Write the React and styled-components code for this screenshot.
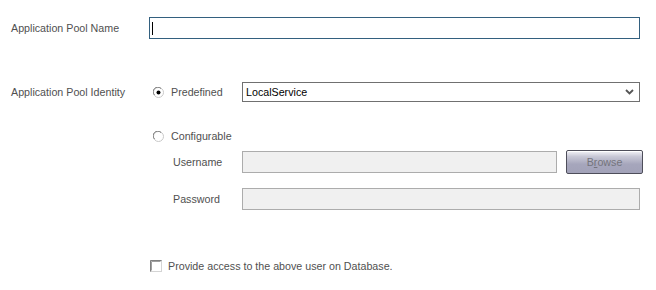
import React from 'react';
import styled, { createGlobalStyle } from 'styled-components';

const GlobalStyle = createGlobalStyle`
    html, body {
        margin: 0;
        padding: 0;
        background: #ffffff;
    }
    body {
        font-family: "Liberation Sans", Arial, sans-serif;
        font-size: 10.7px;
        color: #505050;
    }
`;

const Form = styled.div`
    width: 656px;
    height: 290px;
    box-sizing: border-box;
    padding: 17px 0 0 11px;
    display: flex;
    flex-direction: column;
`;

const Row = styled.div`
    display: flex;
    align-items: center;
    margin-top: ${({top}) => top || 0}px;
    padding-left: ${({indent}) => indent || 0}px;
`;

const Label = styled.span`
    width: ${({width}) => width}px;
    flex-shrink: 0;
    font-size: 10.7px;
    color: #505050;
    white-space: nowrap;
`;

const TextBox = styled.div`
    box-sizing: border-box;
    width: ${({width}) => width}px;
    height: 22px;
    border: 1px solid ${({disabled}) => disabled ? '#acacac' : '#33607f'};
    background: ${({disabled}) => disabled ? '#f0f0f0' : '#ffffff'};
    display: flex;
    align-items: center;
    padding-left: 2px;
`;

const Caret = styled.span`
    width: 1px;
    height: 13px;
    background: #000;
`;

const Select = styled.div`
    box-sizing: border-box;
    width: 398px;
    height: 20px;
    border: 1px solid #707070;
    display: flex;
    align-items: center;
    justify-content: space-between;
    padding: 0 5px 0 3px;
    font-size: 10.7px;
    color: #000;
`;

const Option = styled.label`
    display: flex;
    align-items: center;
    width: ${({width}) => width || 'auto'};
    flex-shrink: 0;
    gap: ${({gap}) => gap || 7}px;
    padding-left: ${({pad}) => pad ?? 4}px;
    box-sizing: border-box;
    font-size: 10.7px;
    color: #505050;
`;

const Button = styled.div`
    box-sizing: border-box;
    width: 77px;
    height: 24px;
    margin-left: 9px;
    border: 1px solid #4e4e5a;
    border-radius: 2px;
    background: linear-gradient(to bottom, #f4f4f8 0%, #c8c8d6 25%, #a6a6bc 60%, #a2a2b8 100%);
    box-shadow: inset 0 1px 0 #ffffff;
    display: flex;
    align-items: center;
    justify-content: center;
    font-size: 10.7px;
    color: #74747c;

    u {
        text-decoration: underline;
    }
`;

const Radio = ({checked}) => (
    <svg width="11" height="11" viewBox="0 0 11 11">
        <circle cx="5.5" cy="5.5" r="5" fill="#fff" stroke="#c8c8c8" />
        <path d="M1.5 8 A4.5 4.5 0 0 1 8 1.5" fill="none" stroke="#7a7a7a" strokeWidth="1" />
        {checked && <circle cx="5.5" cy="5.5" r="2" fill="#000" />}
    </svg>
);

const CheckBox = () => (
    <svg width="12" height="12" viewBox="0 0 12 12">
        <rect x="0.5" y="0.5" width="11" height="11" fill="#fff" stroke="#d4d4d4" />
        <path d="M0.5 11.5 V0.5 H11.5" fill="none" stroke="#808080" />
        <path d="M1.5 10.5 V1.5 H10.5" fill="none" stroke="#a0a0a0" />
    </svg>
);

const Chevron = () => (
    <svg width="9" height="6" viewBox="0 0 9 6">
        <path d="M1 1 L4.5 4.5 L8 1" fill="none" stroke="#555" strokeWidth="1.8" />
    </svg>
);

export default function App() {
    return (
        <>
            <GlobalStyle />
            <Form>
                <Row>
                    <Label width={138}>Application Pool Name</Label>
                    <TextBox width={491}><Caret /></TextBox>
                </Row>

                <Row top={43}>
                    <Label width={138}>Application Pool Identity</Label>
                    <Option width="93px"><Radio checked />Predefined</Option>
                    <Select>LocalService<Chevron /></Select>
                </Row>

                <Row top={28}>
                    <Label width={138} />
                    <Option><Radio />Configurable</Option>
                </Row>

                <Row top={8} indent={162}>
                    <Label width={69}>Username</Label>
                    <TextBox width={315} disabled />
                    <Button>B<u>r</u>owse</Button>
                </Row>

                <Row top={14} indent={162}>
                    <Label width={69}>Password</Label>
                    <TextBox width={398} disabled />
                </Row>

                <Row top={50}>
                    <Label width={138} />
                    <Option pad={1} gap={6}><CheckBox />Provide access to the above user on Database.</Option>
                </Row>
            </Form>
        </>
    );
}
